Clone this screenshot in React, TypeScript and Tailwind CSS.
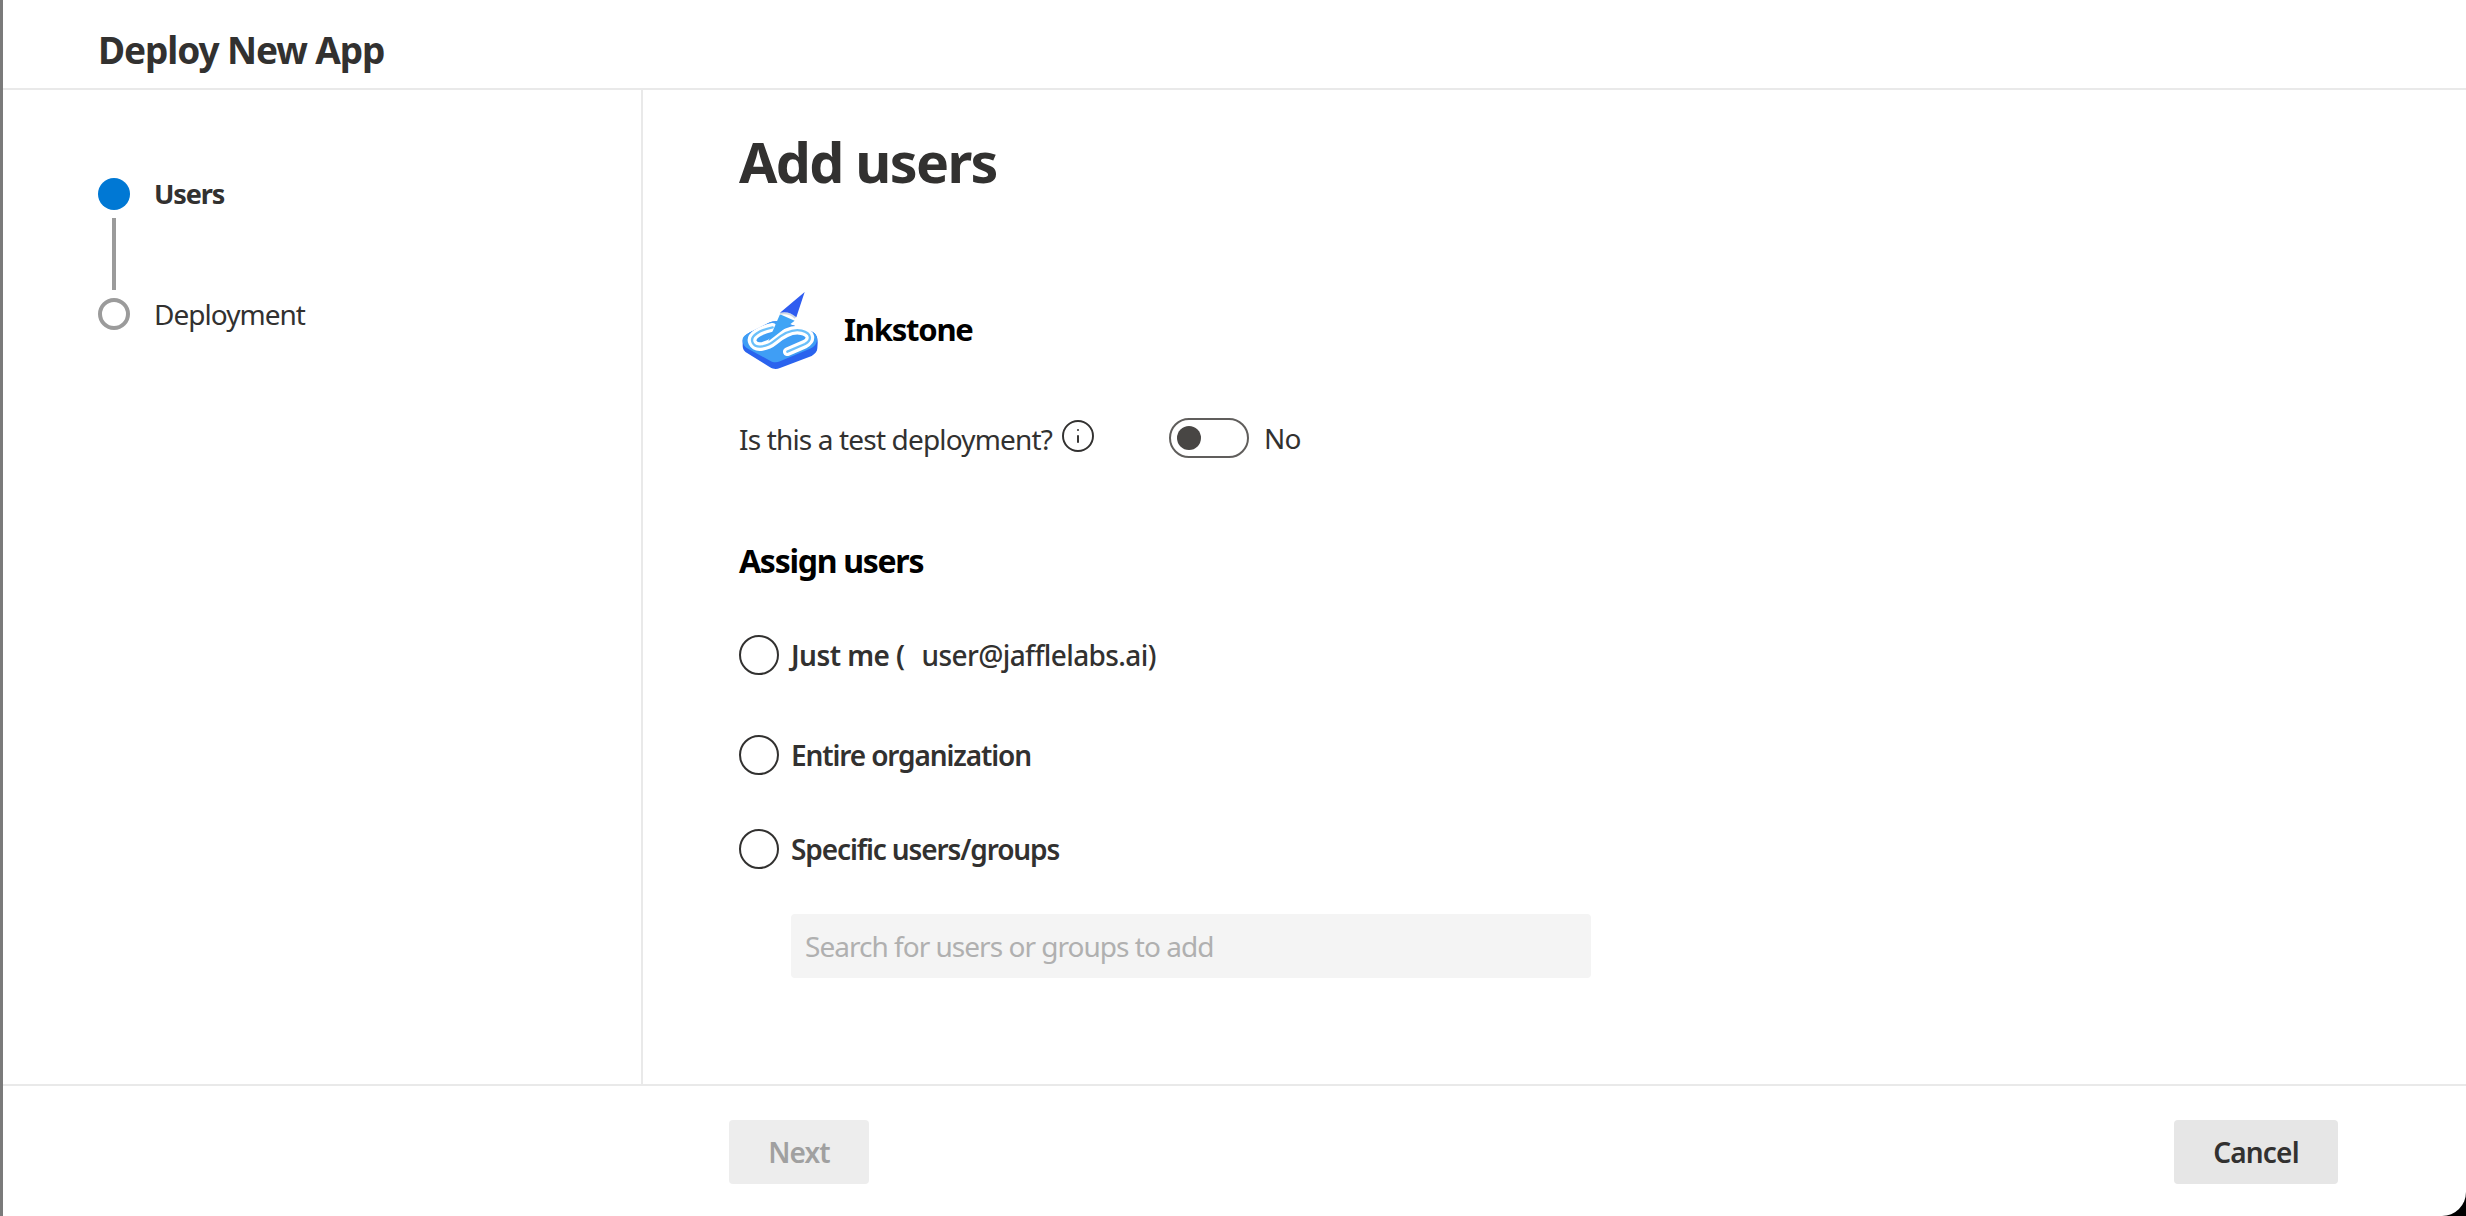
import { Info } from "lucide-react"

function InkstoneLogo() {
  const stripe = "M128 142 C90 150 58 168 68 188 C78 208 112 200 134 182 C160 160 190 146 215 152 C246 160 246 180 225 192 L172 215"
  return (
    <svg width="78" height="78" viewBox="36 36 234 234" className="shrink-0">
      <path d="M38 190 C36 175 45 165 60 157 L120 127 C135 121 150 124 170 130 L240 152 C258 158 264 170 263 190 L262 205 C262 215 255 222 245 228 L150 264 C140 268 130 268 120 262 L50 218 C40 212 38 205 38 195 Z" fill="#2a63ee" />
      <path d="M38 183 C36 172 45 165 60 157 L120 127 C135 121 150 124 170 130 L240 152 C258 158 264 170 260 186 C257 196 250 202 240 206 L150 244 C140 248 130 248 120 242 L50 204 C42 199 39 192 38 183 Z" fill="#3f9ef5" />
      <path d={stripe} fill="none" stroke="#ffffff" strokeWidth="26" strokeLinecap="round" />
      <path d={stripe} fill="none" stroke="#6cc0fa" strokeWidth="7" strokeLinecap="round" />
      <path d="M150 103 L194 122 L115 184 Z" fill="#3fa4f5" />
      <path d="M150 101 Q178 96 196 114" fill="none" stroke="#cfd8e3" strokeWidth="6" />
      <path d="M224 36 L150 98 Q178 92 199 112 Z" fill="#2f5cf0" />
    </svg>
  )
}

function Radio({ children }: { children: React.ReactNode }) {
  return (
    <label className="flex h-10 items-center gap-3 text-[28px] font-semibold tracking-[-0.04em] text-[#323130]">
      <span className="h-10 w-10 shrink-0 rounded-full border-2 border-[#323130]" />
      <span className="whitespace-pre">{children}</span>
    </label>
  )
}

export default function App() {
  return (
    <div className="h-[1216px] w-full bg-black font-['Noto_Sans',sans-serif]">
      <div className="flex h-full flex-col rounded-br-[24px] border-l-[3px] border-[#7a7a7a] bg-white text-[#323130]">
        <header className="flex h-[88px] shrink-0 items-center pl-[95px] pt-3">
          <h2 className="text-[37px] font-bold tracking-[-0.03em]">Deploy New App</h2>
        </header>

        <div className="flex flex-1 border-y-2 border-[#e9e9e9]">
          <aside className="w-[640px] shrink-0 border-r-2 border-[#e9e9e9] pl-[95px] pt-[88px]">
            <div className="flex h-8 items-center gap-[24px]">
              <span className="h-8 w-8 rounded-full bg-[#0078d4]" />
              <span className="text-[27px] font-bold tracking-[-0.04em]">Users</span>
            </div>
            <div className="my-2 ml-[14px] h-[72px] w-1 bg-[#9b9b9b]" />
            <div className="flex h-8 items-center gap-[24px]">
              <span className="h-8 w-8 rounded-full border-4 border-[#9b9b9b]" />
              <span className="text-[28px] tracking-[-0.035em]">Deployment</span>
            </div>
          </aside>

          <main className="flex-1 pl-[96px] pt-[36px]">
            <h1 className="h-[72px] text-[55.5px] font-bold leading-[72px] tracking-[-0.03em]">Add users</h1>

            <div className="mt-[94px] flex h-[78px] items-center gap-[24px] pl-[3px]">
              <InkstoneLogo />
              <span className="mb-1 text-[31px] font-bold tracking-[-0.04em] text-black">Inkstone</span>
            </div>

            <div className="mt-[48px] flex h-10 items-center">
              <span className="mt-[2px] text-[28px] tracking-[-0.03em]">Is this a test deployment?</span>
              <Info size={36} strokeWidth={1.3} className="mb-1 ml-[8px] text-[#323130]" />
              <button className="ml-[73px] flex h-10 w-20 items-center rounded-full border-2 border-[#605e5c] pl-[6px]">
                <span className="h-6 w-6 rounded-full bg-[#484644]" />
              </button>
              <span className="ml-[15px] text-[28px] tracking-[-0.03em]">No</span>
            </div>

            <h3 className="mt-[83px] flex h-10 items-center text-[32px] font-bold tracking-[-0.04em] text-black">Assign users</h3>

            <div className="mt-[54px]">
              <Radio>
                <span className="tracking-[-0.02em]">Just me (</span>
                <span className="ml-[17px] font-medium tracking-[-0.022em]">user@jafflelabs.ai)</span>
              </Radio>
            </div>
            <div className="mt-[60px]">
              <Radio>Entire organization</Radio>
            </div>
            <div className="mt-[54px]">
              <Radio>Specific users/groups</Radio>
            </div>

            <input
              placeholder="Search for users or groups to add"
              className="ml-[52px] mt-[45px] block h-16 w-[800px] rounded bg-[#f4f4f4] px-[14px] text-[28px] tracking-[-0.035em] outline-none placeholder:text-[#b0b0b0]"
            />
          </main>
        </div>

        <footer className="flex h-[130px] shrink-0 items-start justify-between pl-[726px] pr-[128px] pt-[34px]">
          <button className="h-16 w-[140px] rounded bg-[#ededed] text-[28px] font-semibold tracking-[-0.03em] text-[#a0a0a0]">Next</button>
          <button className="h-16 w-[164px] rounded bg-[#e6e6e6] text-[28px] font-semibold tracking-[-0.03em] text-[#323130]">Cancel</button>
        </footer>
      </div>
    </div>
  )
}
